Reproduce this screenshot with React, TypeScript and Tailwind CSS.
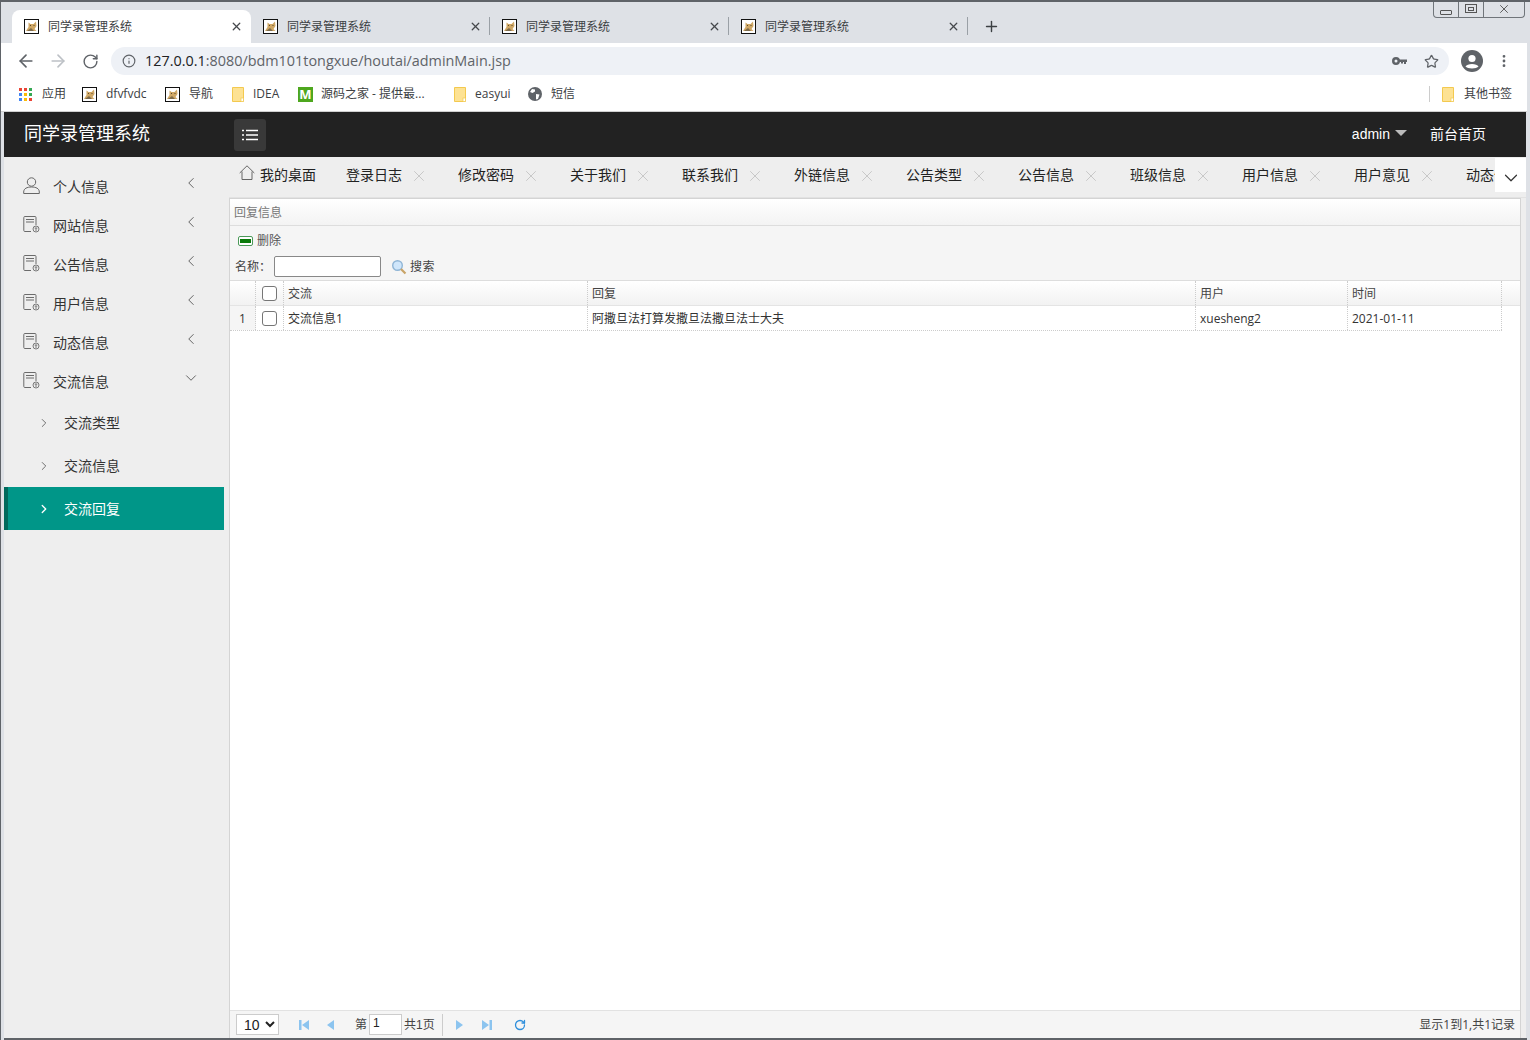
import React from 'react'
import { ArrowLeft, ArrowRight, RotateCw, Info, Star, MoreVertical, X, Plus, ChevronLeft, ChevronDown, ChevronRight } from 'lucide-react'

const font = "font-['Liberation_Sans','Noto_Sans_CJK_SC',sans-serif]"
const wideFont = "font-['Open_Sans','Noto_Sans_CJK_SC',sans-serif]"

function Tomcat({ className = 'ml-0' }: { className?: string }) {
  return (
    <svg width="15" height="15" viewBox="0 0 15 15" className={`shrink-0 ${className}`}>
      <rect x="0.5" y="0.5" width="14" height="14" fill="#fff" stroke="#111" />
      <path d="M2 12 L4.5 8 L4.5 3.5 L6.5 5 L9.5 5 L12 2.5 L12.5 7 L10.5 10 L12.5 12 Z" fill="#d0a866" />
      <path d="M3 12 L7 9 L10 12 Z" fill="#7d6a4a" />
      <path d="M6 6.5 H7 M9.5 6.5 H10.5" stroke="#5b4a30" />
    </svg>
  )
}

function Folder({ className = '' }: { className?: string }) {
  return (
    <svg width="12" height="15" viewBox="0 0 12 15" className={`shrink-0 ${className}`}>
      <path d="M0.5 0.5 H11.5 V14.5 H0.5 Z" fill="#fde293" stroke="#f3c94f" />
      <rect x="9" y="11" width="2.5" height="3.5" fill="#fff" stroke="#f3c94f" strokeWidth="0.7" />
    </svg>
  )
}

function DocIcon() {
  return (
    <svg width="17" height="17" viewBox="0 0 17 17" fill="none" className="shrink-0" stroke="#6b6b6b">
      <path d="M8 15.5 H1.8 Q0.8 15.5 0.8 14.5 V1.5 Q0.8 0.5 1.8 0.5 H12 Q13 0.5 13 1.5 V9" />
      <path d="M3 3.5 H11 M3 6 H11" strokeWidth="1.2" />
      <circle cx="13" cy="13" r="3" stroke="#7a7a7a" />
      <path d="M11.6 12 H14.4 M13 12 V15" strokeWidth="0.9" />
    </svg>
  )
}

function UserIcon() {
  return (
    <svg width="17" height="17" viewBox="0 0 17 17" fill="none" stroke="#666" className="shrink-0">
      <circle cx="8.5" cy="5" r="4.2" />
      <path d="M0.7 16.5 V15 C0.7 11.5 4 10 8.5 10 C13 10 16.3 11.5 16.3 15 V16.5 Z" />
    </svg>
  )
}

function ChromeTab({ active }: { active?: boolean }) {
  return (
    <div className={`relative flex h-[33px] w-[239px] shrink-0 items-center pb-px pl-[12px] ${active ? 'rounded-t-[8px] bg-white' : ''}`}>
      <Tomcat />
      <span className="ml-[9px] pt-[2px] text-[12px] text-[#3c4043]">同学录管理系统</span>
      <X size={13} strokeWidth={2.4} className="absolute right-[8px] top-[10px] text-[#45484c]" />
    </div>
  )
}

const bookmarks = [
  { kind: 'tomcat', label: 'dfvfvdc', w: 83 },
  { kind: 'tomcat', label: '导航', w: 66 },
  { kind: 'folder', label: 'IDEA', w: 67 },
  { kind: 'm', label: '源码之家 - 提供最...', w: 155 },
  { kind: 'folder', label: 'easyui', w: 75 },
  { kind: 'globe', label: '短信', w: 60 },
]

function AppsGrid() {
  const colors = ['#ea4335', '#ea4335', '#34a853', '#4285f4', '#fbbc05', '#34a853', '#4285f4', '#fbbc05', '#ea4335']
  return (
    <div className="grid w-[13px] shrink-0 grid-cols-3 gap-[2px]">
      {colors.map((c, i) => (
        <span key={i} className="h-[3px] w-[3px]" style={{ background: c }} />
      ))}
    </div>
  )
}

const sideItems = ['网站信息', '公告信息', '用户信息', '动态信息']
const tabs = ['登录日志', '修改密码', '关于我们', '联系我们', '外链信息', '公告类型', '公告信息', '班级信息', '用户信息', '用户意见']

function SideRow({ icon, label, open }: { icon: React.ReactNode; label: string; open?: boolean }) {
  return (
    <div className="flex h-[39px] items-center pl-[19px] text-[14px] text-[#333]">
      <span className="flex w-[30px] shrink-0">{icon}</span>
      <span className="w-[129px] pt-[3px]">{label}</span>
      {open ? (
        <ChevronDown size={18} strokeWidth={1.2} className="-mt-[5px] text-[#555]" />
      ) : (
        <ChevronLeft size={18} strokeWidth={1.2} className="-mt-[5px] text-[#555]" />
      )}
    </div>
  )
}

function SubRow({ label, active }: { label: string; active?: boolean }) {
  return (
    <div className={`flex h-[43px] w-[220px] items-center text-[14px] ${active ? 'border-l-4 border-[#00695c] bg-[#009688] pl-[29px] text-white' : 'pl-[33px] text-[#333]'}`}>
      <ChevronRight size={14} strokeWidth={active ? 2.2 : 1.6} className={active ? 'text-white' : 'text-[#666]'} />
      <span className="ml-[13px] pt-[1px]">{label}</span>
    </div>
  )
}

const cols = ['w-[304px]', 'w-[608px]', 'w-[152px]', 'w-[154px]']

function PagerSep() {
  return <span className="mx-[7px] h-[22px] w-px shrink-0 bg-[#ccc]" />
}

export default function App() {
  return (
    <div className={`${font} flex h-[1040px] w-[1530px] flex-col overflow-hidden border-t-2 border-l border-[#5f6368] bg-[#dee1e6]`}>
      {/* tab strip */}
      <div className="relative flex h-[41px] shrink-0 items-end pl-[11px]">
        <ChromeTab active />
        <ChromeTab />
        <span className="mb-[8px] h-[18px] w-px bg-[#9aa0a6] -ml-px" />
        <ChromeTab />
        <span className="mb-[8px] h-[18px] w-px bg-[#9aa0a6] -ml-px" />
        <ChromeTab />
        <span className="mb-[8px] h-[18px] w-px bg-[#9aa0a6] -ml-px" />
        <Plus size={17} strokeWidth={2} className="mb-[8px] ml-[15px] text-[#3c4043]" />
        <div className="absolute right-[5px] -top-[2px] flex h-[18px] w-[92px] rounded-b-[4px] border border-t-0 border-[#70757a] text-[#555]">
          <span className="flex w-[25px] items-end justify-center border-r border-[#70757a] pb-[2px]">
            <span className="h-[5px] w-[12px] rounded-[1px] border border-[#555]" />
          </span>
          <span className="flex w-[25px] items-center justify-center border-r border-[#70757a]">
            <span className="flex h-[9px] w-[12px] items-center justify-center border border-[#555]"><span className="h-[4px] w-[6px] border border-[#555]" /></span>
          </span>
          <span className="flex flex-1 items-center justify-center"><X size={14} strokeWidth={1.6} /></span>
        </div>
      </div>

      {/* page with browser chrome side gutters */}
      <div className="mr-[3px] flex min-h-0 flex-1 flex-col">
        {/* address bar */}
        <div className="flex h-[37px] shrink-0 items-center bg-white pb-px pl-[15px]">
          <ArrowLeft size={20} strokeWidth={2} className="text-[#5f6368]" />
          <ArrowRight size={20} strokeWidth={2} className="ml-[12px] text-[#bdc1c6]" />
          <RotateCw size={17} strokeWidth={2} className="ml-[14px] text-[#5f6368]" />
          <div className="ml-[12px] flex h-[28px] w-[1338px] items-center rounded-full bg-[#eef1f6] pl-[11px]">
            <Info size={14} strokeWidth={2} className="text-[#5f6368]" />
            <span className={`${wideFont} ml-[9px] text-[14.4px] text-[#5f6368]`}><span className="text-[#202124]">127.0.0.1</span>:8080/bdm101tongxue/houtai/adminMain.jsp</span>
            <svg width="15" height="8" viewBox="0 0 15 8" className="ml-auto shrink-0" fill="#5f6368">
              <path fillRule="evenodd" d="M4 0 A4 4 0 1 1 4 8 A4 4 0 1 1 4 0 Z M4 2.5 A1.5 1.5 0 1 0 4 5.5 A1.5 1.5 0 1 0 4 2.5 Z" />
              <path d="M7 2.5 H15 V5 H14 V7 H12 V5 H11 V6.5 H9 V5 H7 Z" />
            </svg>
            <Star size={15} strokeWidth={2} className="ml-[17px] mr-[10px] text-[#5f6368]" />
          </div>
          <svg width="22" height="22" viewBox="0 0 22 22" className="ml-[12px] shrink-0">
            <circle cx="11" cy="11" r="11" fill="#5f6368" />
            <circle cx="11" cy="8.5" r="3.6" fill="#fff" />
            <path d="M4.5 16.5 C6 13 16 13 17.5 16.5 C15.5 19 6.5 19 4.5 16.5 Z" fill="#fff" />
          </svg>
          <MoreVertical size={16} strokeWidth={2.2} className="ml-[13px] text-[#5f6368]" />
        </div>

        {/* bookmarks */}
        <div className={`${wideFont} flex h-[32px] shrink-0 items-center border-b border-[#d0d0d0] bg-white pb-[3px] pl-[18px] text-[12px] text-[#3c4043]`}>
          <AppsGrid />
          <span className="ml-[10px] w-[40px]">应用</span>
          {bookmarks.map(b => (
            <div key={b.label} className="flex items-center" style={{ width: b.w }}>
              {b.kind === 'tomcat' && <Tomcat />}
              {b.kind === 'folder' && <Folder className="ml-[1px]" />}
              {b.kind === 'm' && <span className="flex h-[15px] w-[15px] shrink-0 items-center justify-center bg-[#4ea71e] text-[13px] font-bold leading-none text-white">M</span>}
              {b.kind === 'globe' && (
                <svg width="14" height="14" viewBox="0 0 14 14" className="shrink-0">
                  <circle cx="7" cy="7" r="7" fill="#5f6368" />
                  <path d="M4 2 L7 2.5 L7 4.5 L4.5 6 L2 5 Z M8 7 L11.5 7.5 L10 12 L8 12.5 Z" fill="#fff" />
                </svg>
              )}
              <span className={`${b.kind === 'm' ? 'ml-[8px]' : 'ml-[9px]'} whitespace-nowrap`}>{b.label}</span>
            </div>
          ))}
          <div className="ml-auto flex items-center pr-[15px]">
            <span className="mr-[12px] h-[16px] w-px bg-[#ccc]" />
            <Folder />
            <span className="ml-[10px]">其他书签</span>
          </div>
        </div>

        {/* app header */}
        <div className="ml-[3px] mr-[1px] flex h-[45px] shrink-0 items-center bg-[#222] pl-[20px] text-white">
          <span className="w-[210px] text-[18px]">同学录管理系统</span>
          <button className="flex h-[32px] w-[32px] items-center justify-center rounded-[3px] bg-[#393939]">
            <svg width="16" height="12" viewBox="0 0 16 12" stroke="#fff" strokeWidth="1.3">
              <path d="M0 1.5 H2 M4 1.5 H16 M0 6 H2 M4 6 H16 M0 10.5 H2 M4 10.5 H16" />
            </svg>
          </button>
          <span className="ml-auto text-[14px]">admin</span>
          <span className="ml-[5px] mb-[4px] h-0 w-0 border-x-[6px] border-t-[6px] border-x-transparent border-t-[#bbb]" />
          <span className="ml-[23px] mr-[40px] text-[14px]">前台首页</span>
        </div>

        <div className="ml-[3px] mr-[1px] flex min-h-0 flex-1 bg-[#eee]">
          {/* sidebar */}
          <aside className="w-[225px] shrink-0 pt-[9px]">
            <SideRow icon={<UserIcon />} label="个人信息" />
            {sideItems.map(s => (
              <SideRow key={s} icon={<DocIcon />} label={s} />
            ))}
            <SideRow icon={<DocIcon />} label="交流信息" open />
            <div className="mt-[1px]">
              <SubRow label="交流类型" />
              <SubRow label="交流信息" />
              <SubRow label="交流回复" active />
            </div>
          </aside>

          {/* main */}
          <main className="flex min-w-0 flex-1 flex-col">
            {/* tabs */}
            <div className="relative flex h-[41px] shrink-0 items-start overflow-hidden border-b border-[#e2e2e2] pt-[8px] text-[14px] text-[#222]">
              <svg width="16" height="16" viewBox="0 0 16 16" fill="none" stroke="#666" className="ml-[10px] shrink-0">
                <path d="M0.7 8 L8 0.8 L15.3 8 M3 6.5 V14.5 H13 V6.5" />
              </svg>
              <span className="ml-[5px] w-[86px]">我的桌面</span>
              {tabs.map(t => (
                <div key={t} className="flex w-[112px] shrink-0 items-center">
                  <span>{t}</span>
                  <X size={18} strokeWidth={1} className="ml-[8px] shrink-0 text-[#bbb]" />
                </div>
              ))}
              <span className="whitespace-nowrap">动态信息</span>
              <div className="absolute right-0 top-[1px] flex h-[34px] w-[31px] items-center justify-center bg-white">
                <ChevronDown size={22} strokeWidth={1.3} className="mt-[5px] text-[#333]" />
              </div>
            </div>

            {/* panel */}
            <div className="mr-[5px] flex min-h-0 flex-1 flex-col border-l border-r border-t border-[#d4d4d4] bg-white text-[12px] text-[#444]">
              <div className="flex h-[27px] shrink-0 items-center border-b border-[#ddd] bg-gradient-to-b from-[#fff] to-[#f3f3f3] pl-[4px] pt-[2px] text-[#777]">回复信息</div>
              <div className="shrink-0 border-b border-[#ddd] bg-[#f5f5f5]">
                <div className="flex h-[27px] items-center pl-[8px] pt-[2px]">
                  <span className="flex h-[10px] w-[15px] items-center justify-center rounded-[2px] border border-[#4c9a5a] bg-white"><span className="h-[4px] w-[11px] bg-[#0a7a0a]" /></span>
                  <span className="ml-[4px] text-[#555]">删除</span>
                </div>
                <div className="flex h-[27px] items-center pl-[5px]">
                  <span>名称：</span>
                  <input className="ml-[3px] h-[21px] w-[107px] rounded-[2px] border border-[#888] bg-white" />
                  <svg width="16" height="16" viewBox="0 0 16 16" className="ml-[10px] shrink-0">
                    <circle cx="6.5" cy="6.5" r="4.8" fill="#cfe6fb" stroke="#8fb5d6" strokeWidth="1.4" />
                    <path d="M10 10 L14.5 14.5" stroke="#c9a468" strokeWidth="2.2" />
                  </svg>
                  <span className="ml-[3px] tracking-[0.5px]">搜索</span>
                </div>
              </div>

              {/* grid */}
              <div className="flex h-[25px] shrink-0 border-b border-[#e4e4e4] bg-gradient-to-b from-[#fff] to-[#f2f2f2]">
                <span className="w-[26px] shrink-0 border-r border-dotted border-[#ccc]" />
                <span className="flex w-[28px] shrink-0 items-center justify-center border-r border-dotted border-[#ccc]">
                  <span className="h-[15px] w-[15px] rounded-[3px] border border-[#767676] bg-white" />
                </span>
                {['交流', '回复', '用户', '时间'].map((h, i) => (
                  <span key={h} className={`${cols[i]} flex shrink-0 items-center border-r border-dotted border-[#ccc] pl-[4px] pt-[2px]`}>{h}</span>
                ))}
              </div>
              <div className={`${wideFont} flex h-[25px] w-[1272px] shrink-0 border-b border-dotted border-[#ccc] text-[#333]`}>
                <span className="flex w-[26px] shrink-0 items-center justify-center border-r border-dotted border-[#ccc] bg-[#f5f5f5] pt-px">1</span>
                <span className="flex w-[28px] shrink-0 items-center justify-center border-r border-dotted border-[#ccc]">
                  <span className="h-[15px] w-[15px] rounded-[3px] border border-[#767676] bg-white" />
                </span>
                {['交流信息1', '阿撒旦法打算发撒旦法撒旦法士大夫', 'xuesheng2', '2021-01-11'].map((c, i) => (
                  <span key={c} className={`${cols[i]} flex shrink-0 items-center border-r border-dotted border-[#ccc] pl-[4px] pt-px`}>{c}</span>
                ))}
              </div>
              <div className="flex-1" />

              {/* pager */}
              <div className="flex h-[28px] shrink-0 items-center border-t border-[#e2e2e2] bg-[#f5f5f5] pl-[6px] text-[#444]">
                <select defaultValue="10" className="h-[21px] w-[43px] border border-[#ccc] bg-white pl-[3px] text-[14px] text-[#222]">
                  <option>10</option>
                </select>
                <span className="ml-[1px]"><PagerSep /></span>
                <svg width="10" height="10" viewBox="0 0 10 10" className="ml-[5px] shrink-0" fill="#8cc4ef"><rect width="2.5" height="10" /><path d="M10 0 V10 L3 5 Z" /></svg>
                <svg width="8" height="10" viewBox="0 0 8 10" className="ml-[18px] shrink-0" fill="#8cc4ef"><path d="M7 0 V10 L0 5 Z" /></svg>
                <span className="ml-[6px]"><PagerSep /></span>
                <span>第</span>
                <input defaultValue="1" className="ml-[2px] h-[21px] w-[33px] border border-[#ccc] bg-white pb-[3px] pl-[3px] text-[12px] text-[#222]" />
                <span className="ml-[2px]">共1页</span>
                <PagerSep />
                <svg width="8" height="10" viewBox="0 0 8 10" className="ml-[5px] shrink-0" fill="#8cc4ef"><path d="M1 0 V10 L8 5 Z" /></svg>
                <svg width="10" height="10" viewBox="0 0 10 10" className="ml-[19px] shrink-0" fill="#8cc4ef"><path d="M0 0 V10 L7 5 Z" /><rect x="7.5" width="2.5" height="10" /></svg>
                <span className="ml-[5px]"><PagerSep /></span>
                <RotateCw size={12} strokeWidth={2.6} className="ml-[3px] text-[#2f8fdc]" />
                <span className={`${wideFont} ml-auto pr-[5px]`}>显示1到1,共1记录</span>
              </div>
            </div>
          </main>
        </div>
        <div className="ml-[3px] h-[2px] shrink-0 bg-[#5f6368]" />
      </div>
    </div>
  )
}
